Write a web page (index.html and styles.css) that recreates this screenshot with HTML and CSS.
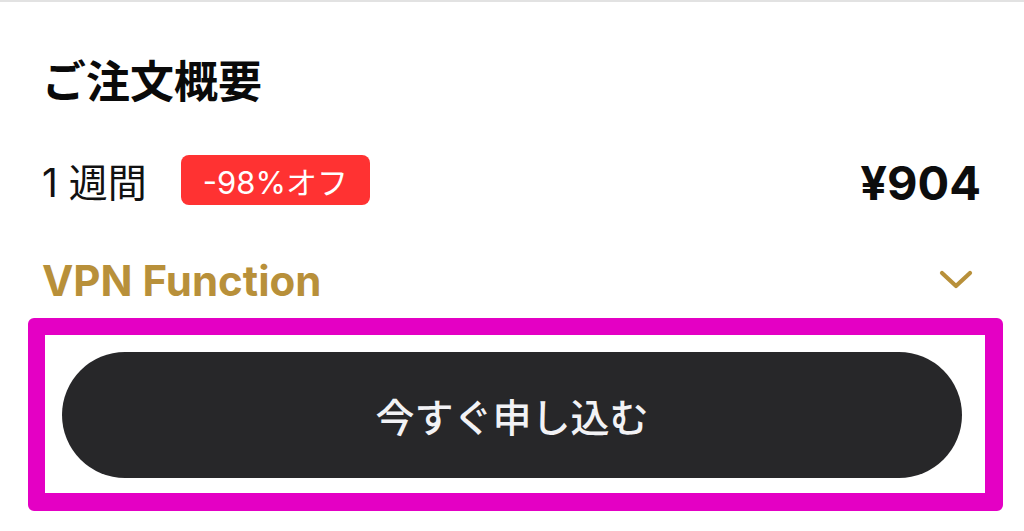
FILE: index.html
```html
<!DOCTYPE html>
<html lang="ja">
<head>
<meta charset="utf-8">
<link rel="stylesheet" href="styles.css">
</head>
<body>
<div class="page">
  <section class="summary">
    <h1 class="title">ご注文概要</h1>
    <div class="row plan">
      <div class="plan-left">
        <span class="plan-name">1 週間</span>
        <span class="badge">-98%オフ</span>
      </div>
      <span class="price">¥904</span>
    </div>
    <div class="row feature">
      <span class="feature-name">VPN Function</span>
      <svg class="chevron" width="34" height="20" viewBox="0 0 34 20" aria-hidden="true">
        <path d="M3 3 L17 16 L31 3" fill="none" stroke="#b8903a" stroke-width="4.2" stroke-linecap="round" stroke-linejoin="round"/>
      </svg>
    </div>
  </section>
  <div class="highlight">
    <button class="cta">今すぐ申し込む</button>
  </div>
</div>
</body>
</html>
```
FILE: styles.css
```css
html, body {
  margin: 0;
  padding: 0;
  background: #ffffff;
}
body {
  font-family: Inter, "Noto Sans CJK JP", sans-serif;
  color: #111111;
}
.page {
  width: 1024px;
  height: 531px;
  border-top: 2px solid #e2e2e2;
  box-sizing: border-box;
  overflow: hidden;
}
.summary {
  padding: 0 46px 0 42px;
}
.title {
  margin: 49px 0 0 0;
  height: 56px;
  line-height: 56px;
  font-family: "Noto Sans CJK JP", sans-serif;
  font-size: 44px;
  font-weight: 700;
  color: #0a0a0a;
}
.row {
  display: flex;
  align-items: center;
  justify-content: space-between;
  height: 56px;
}
.plan {
  margin-top: 47px;
}
.plan-left {
  display: flex;
  align-items: center;
  gap: 34px;
}
.plan-name {
  font-size: 39px;
  font-weight: 400;
  color: #111111;
  line-height: 1;
}
.badge {
  display: inline-flex;
  align-items: center;
  height: 50px;
  padding: 0 22px;
  border-radius: 8px;
  background: #ff3232;
  color: #ffffff;
  font-size: 31px;
  font-weight: 400;
  margin-top: -4px;
}
.price {
  font-size: 47px;
  font-weight: 700;
  color: #0d0d0d;
  line-height: 1;
  margin-right: -3px;
}
.feature {
  margin-top: 43px;
}
.feature-name {
  font-size: 42px;
  font-weight: 700;
  color: #b8903a;
  line-height: 1;
}
.chevron {
  margin-right: 5px;
  margin-top: -2px;
}
.highlight {
  margin: 9px 0 0 28px;
  width: 975px;
  height: 193px;
  box-sizing: border-box;
  border: 17px solid #e400c4;
  border-right-width: 18px;
  border-bottom-width: 18px;
  border-radius: 6px;
  padding: 17px 23px 15px 17px;
  display: flex;
}
.cta {
  flex: 1;
  border: none;
  border-radius: 63px;
  background: #272729;
  color: #f2f2f5;
  font-family: "Noto Sans CJK JP", sans-serif;
  font-size: 39px;
  font-weight: 500;
  cursor: pointer;
}
```
